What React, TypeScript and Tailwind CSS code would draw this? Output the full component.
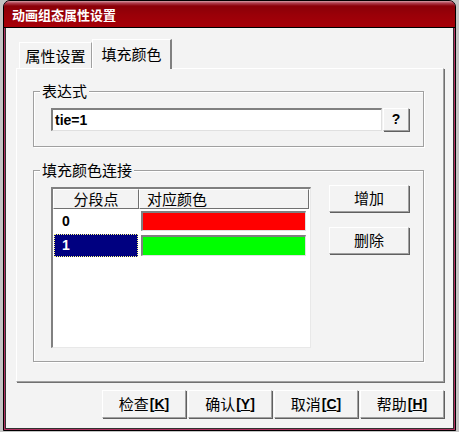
import React from "react";

const cjk = { fontFamily: '"Noto Sans CJK SC", "Noto Sans", sans-serif' };
const lat = { fontFamily: '"Liberation Sans", Arial, sans-serif' };

function Btn({ label, hot, className }: { label: string; hot?: string; className: string }) {
  return (
    <div
      className={`flex items-center justify-center bg-[#f3f3f3] border border-t-white border-l-white border-r-[#a0a0a0] border-b-[#a0a0a0] shadow-[1px_1px_0_#606060] text-[15px] text-black ${className}`}
      style={cjk}
    >
      <span>{label}</span>
      {hot && (
        <span className="font-bold text-[14px] ml-[1px]" style={lat}>
          [<span className="underline">{hot}</span>]
        </span>
      )}
    </div>
  );
}

function Group({ title, className, children }: { title: string; className: string; children: React.ReactNode }) {
  return (
    <div className={`relative border border-[#a0a0a0] shadow-[1px_1px_0_#fff,inset_1px_1px_0_#fff] ${className}`}>
      <span
        className="absolute left-[6px] top-[-11px] bg-[#f3f3f3] px-[2px] text-[15px] leading-[20px] text-black"
        style={cjk}
      >
        {title}
      </span>
      {children}
    </div>
  );
}

export default function App() {
  return (
    <div className="w-[459px] h-[432px] bg-[#c4c4c4] overflow-hidden">
      <div className="ml-[3px] w-[453px] h-[431px] border border-black rounded-t-[7px] bg-[#b03060] flex flex-col overflow-hidden">
        {/* title bar */}
        <div className="h-[27px] bg-[linear-gradient(#d8a0a8_0px,#b04050_2px,#8a0008_5px,#9a0008_14px,#a80008_27px)] border-b border-black flex items-center pl-[8px]">
          <span className="text-white font-bold text-[13px] leading-none" style={cjk}>
            动画组态属性设置
          </span>
        </div>
        {/* client */}
        <div className="mx-[1px] mb-[1px] flex-1 bg-[#f3f3f3] flex flex-col border-l border-r border-b border-[#303030]">
          <div className="ml-[10px] mt-[10px] flex items-end h-[30px]">
            <div
              className="ml-[3px] w-[73px] h-[26px] border-t border-l border-white border-r border-r-[#a0a0a0] flex items-center justify-center text-[15px] text-black pt-[2px]"
              style={cjk}
            >
              属性设置
            </div>
            <div
              className="w-[80px] h-[30px] mb-[-1px] relative z-10 bg-[#f3f3f3] border-t border-l border-white border-r-2 border-r-[#808080] flex items-center justify-center text-[15px] text-black pb-[1px]"
              style={cjk}
            >
              填充颜色
            </div>
          </div>
          {/* panel */}
          <div className="ml-[10px] w-[428px] h-[314px] border border-t-white border-l-white border-r-[#a0a0a0] border-b-[#a0a0a0] shadow-[1px_1px_0_#707070] flex flex-col">
            <Group title="表达式" className="ml-[16px] mt-[22px] w-[391px] h-[56px]">
              <div className="flex ml-[17px] mt-[16px]">
                <div className="w-[331px] h-[23px] bg-white border-t-2 border-l-2 border-t-[#808080] border-l-[#808080] border-b border-r border-b-[#e0e0e0] border-r-[#e0e0e0] flex items-center pl-[2px]">
                  <span className="font-bold text-[14px] text-black" style={lat}>
                    tie=1
                  </span>
                </div>
                <div
                  className="ml-[1px] w-[26px] h-[23px] border border-t-white border-l-white border-r-[#a0a0a0] border-b-[#a0a0a0] shadow-[1px_1px_0_#606060] flex items-center justify-center font-bold text-[14px] text-black"
                  style={lat}
                >
                  ?
                </div>
              </div>
            </Group>
            <Group title="填充颜色连接" className="ml-[16px] mt-[23px] w-[391px] h-[192px]">
              <div className="flex ml-[17px] mt-[16px]">
                {/* list */}
                <div className="w-[260px] h-[161px] bg-white border-t-2 border-l-2 border-t-[#808080] border-l-[#808080] border-b border-r border-b-[#e8e8e8] border-r-[#e8e8e8] flex flex-col">
                  <div className="flex h-[20px] text-[15px] text-black" style={cjk}>
                    <div className="w-[86px] bg-[#f3f3f3] border border-t-white border-l-white border-r-[#707070] border-b-[#707070] flex items-center justify-center">
                      分段点
                    </div>
                    <div className="w-[170px] bg-[#f3f3f3] border border-t-white border-l-white border-r-[#707070] border-b-[#707070] flex items-center pl-[7px]">
                      对应颜色
                    </div>
                  </div>
                  <div className="flex h-[24px] items-center">
                    <div className="w-[86px] pl-[9px] font-bold text-[14px] text-black" style={lat}>
                      0
                    </div>
                    <div className="ml-[2px] w-[165px] h-[20px] bg-[#ff0000] border-t-2 border-l-2 border-t-[#808080] border-l-[#808080] border-b border-r border-b-[#e0e0e0] border-r-[#e0e0e0]" />
                  </div>
                  <div className="flex h-[25px] items-center">
                    <div
                      className="ml-[1px] w-[84px] h-[23px] bg-[#000080] border border-dotted border-[#ffff80] flex items-center pl-[7px] font-bold text-[14px] text-white"
                      style={lat}
                    >
                      1
                    </div>
                    <div className="ml-[3px] w-[165px] h-[21px] bg-[#00ff00] border-t-2 border-l-2 border-t-[#808080] border-l-[#808080] border-b border-r border-b-[#e0e0e0] border-r-[#e0e0e0]" />
                  </div>
                </div>
                <div className="ml-[18px] flex flex-col mt-[-2px]">
                  <Btn label="增加" className="w-[80px] h-[27px]" />
                  <Btn label="删除" className="w-[80px] h-[27px] mt-[15px]" />
                </div>
              </div>
            </Group>
          </div>
          {/* bottom buttons */}
          <div className="flex ml-[96px] mt-[8px] gap-[2px]">
            <Btn label="检查" hot="K" className="w-[84px] h-[28px]" />
            <Btn label="确认" hot="Y" className="w-[84px] h-[28px]" />
            <Btn label="取消" hot="C" className="w-[84px] h-[28px]" />
            <Btn label="帮助" hot="H" className="w-[84px] h-[28px]" />
          </div>
        </div>
      </div>
    </div>
  );
}
